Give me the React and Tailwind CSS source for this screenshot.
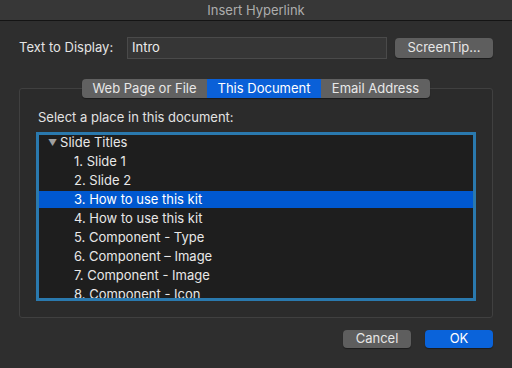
import React from "react"

const items = [
  "1. Slide 1",
  "2. Slide 2",
  "3. How to use this kit",
  "4. How to use this kit",
  "5. Component - Type",
  "6. Component – Image",
  "7. Component - Image",
  "8. Component - Icon",
]

export default function App() {
  return (
    <div
      className="w-[512px] h-[368px] bg-[#2e2e2e] text-[13px] text-[#e4e4e4] overflow-hidden flex flex-col"
      style={{ fontFamily: "Inter, 'Open Sans', sans-serif" }}
    >
      {/* title bar */}
      <div className="h-[21px] bg-[#373737] border-b border-[#141414] flex items-center justify-center text-[#adadad] leading-none">
        Insert Hyperlink
      </div>

      {/* text to display */}
      <div className="mt-[16px] flex items-center px-[19px]">
        <div className="w-[108px]">Text to Display:</div>
        <div className="w-[260px] h-[22px] bg-[#363636] border border-[#4a4a4a] flex items-center px-[4px] text-[#ececec]">
          Intro
        </div>
        <button className="ml-[8px] w-[98px] h-[20px] rounded-[4px] bg-[#5e5e5e] text-[#e6e6e6] flex items-center justify-center shadow-[0_1px_1px_rgba(0,0,0,0.4)]">
          ScreenTip...
        </button>
      </div>

      {/* tabs */}
      <div className="mt-[20px] relative z-10 flex justify-center">
        <div className="flex h-[19px] rounded-[4px] overflow-hidden bg-[#616161] shadow-[0_1px_1px_rgba(0,0,0,0.4)]">
          <div className="w-[125px] flex items-center justify-center text-[#e8e8e8]">Web Page or File</div>
          <div className="w-[114px] flex items-center justify-center bg-[#0a60d8] text-white">This Document</div>
          <div className="w-[109px] flex items-center justify-center text-[#e8e8e8]">Email Address</div>
        </div>
      </div>

      {/* group box */}
      <div className="mx-[19px] -mt-[10px] h-[230px] border border-[#404040] rounded-[3px] bg-[#2b2b2b] px-[16px] pt-[20px]">
        <div className="h-[16px] leading-[16px] pl-[2px] text-[#e2e2e2]">Select a place in this document:</div>
        <div className="mt-[7px] h-[169px] border-[3px] border-[#2a79ae] bg-[#1e1e1e] overflow-hidden">
          <div className="-mt-[1px]">
            <div className="h-[17px] mb-[2px] flex items-center pl-[9px] text-[#e8e8e8]">
              <span className="text-[9px] text-[#a0a0a0] mr-[3px]">▼</span>
              Slide Titles
            </div>
            {items.map((t, i) => (
              <div
                key={i}
                className={
                  i === 2
                    ? "h-[17px] mb-[2px] flex items-center pl-[35px] bg-[#0058d0] text-white"
                    : "h-[17px] mb-[2px] flex items-center pl-[35px] text-[#e8e8e8]"
                }
              >
                {t}
              </div>
            ))}
          </div>
        </div>
      </div>

      {/* buttons */}
      <div className="mt-[12px] flex justify-end gap-[14px] px-[19px]">
        <button className="w-[68px] h-[18px] rounded-[4px] bg-[#5e5e5e] text-[#e6e6e6] flex items-center justify-center shadow-[0_1px_1px_rgba(0,0,0,0.4)]">
          Cancel
        </button>
        <button className="w-[68px] h-[18px] rounded-[4px] bg-[#0a63da] text-white flex items-center justify-center shadow-[0_1px_1px_rgba(0,0,0,0.4)]">
          OK
        </button>
      </div>
    </div>
  )
}
